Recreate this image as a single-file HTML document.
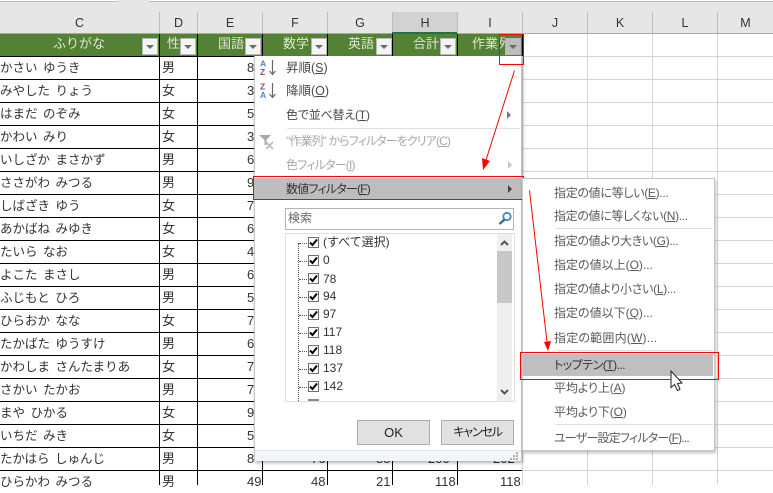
<!DOCTYPE html>
<html lang="ja"><head><meta charset="utf-8">
<style>
html,body{margin:0;padding:0}
body{width:773px;height:485px;overflow:hidden;background:#fff;position:relative;font-family:"Liberation Sans","Noto Sans CJK JP",sans-serif;font-size:12px;color:#222}
div,span,i,b{position:absolute;font-style:normal;font-weight:normal;white-space:nowrap}
.h{top:12px;height:21px;line-height:22px;text-align:center;font-size:12.5px;color:#333;border-left:1px solid #bdbdbd;box-sizing:border-box}
.g{top:34px;height:22px;line-height:20px;color:#dfe8d8;font-size:13px}
.b{top:38px;width:16px;height:17px;background:#f4f4f4;border:1px solid #b8b8b8;box-sizing:border-box}
.b:after{content:"";position:absolute;left:3px;top:6px;border-left:4px solid transparent;border-right:4px solid transparent;border-top:4px solid #6a6a6a}
.v{top:34px;bottom:0;width:1px;background:#000}
.r{left:0;width:522px;height:23px;border-top:1px solid #000;box-sizing:border-box;line-height:22px}
.n{left:0;font-size:12.5px;color:#333;word-spacing:2px}
.s{left:162px;font-size:13px;color:#333}
.d{left:247px;font-size:13px;color:#333;font-family:"Liberation Sans",sans-serif}
.m{left:286px;height:20px;line-height:20px;color:#4a4a4a;font-size:12px;font-feature-settings:"palt"}
.o{color:#a8a8a8}
.sm{left:554px;height:20px;line-height:20px;color:#5a5a5a;font-size:12px;font-feature-settings:"palt"}
u{text-underline-offset:1px}
.sep{height:1px;background:#e0e0e0}
.c{left:308px;width:9px;height:9px;border:1px solid #707070;background:#fff}
.c svg{position:absolute;left:0;top:0}
.l{left:323px;height:18px;line-height:18px;font-size:12px;color:#333}
.dh{left:299px;width:8px;height:0;border-top:1px dotted #555}
.red{border:1px solid #f00;box-sizing:border-box}
.btn{top:420px;width:73px;height:25px;background:#e1e1e1;border:1px solid #adadad;box-sizing:border-box;text-align:center;line-height:23px;font-size:12px;color:#222;font-feature-settings:"palt"}
</style></head><body>

<div style="left:0;top:0;width:773px;height:12px;background:#e6e6e6"></div>
<div style="left:0;top:0;width:118px;height:2px;background:#fff;border-bottom:1px solid #bbb;box-sizing:border-box"></div>
<div style="left:149px;top:0;width:624px;height:2px;background:#fff;border-bottom:1px solid #bbb;box-sizing:border-box"></div>

<div style="left:0;top:12px;width:773px;height:22px;background:#e6e6e6;border-bottom:1px solid #a8a8a8;box-sizing:border-box"></div>
<div class="h" style="left:0;width:159px;border:0">C</div>
<div class="h" style="left:159px;width:38px">D</div>
<div class="h" style="left:197px;width:65px">E</div>
<div class="h" style="left:262px;width:65px">F</div>
<div class="h" style="left:327px;width:65px">G</div>
<div class="h" style="left:392px;width:65px;background:#d2d2d2">H</div>
<div class="h" style="left:457px;width:65px">I</div>
<div class="h" style="left:522px;width:65px">J</div>
<div class="h" style="left:587px;width:65px">K</div>
<div class="h" style="left:652px;width:65px">L</div>
<div class="h" style="left:717px;width:56px">M</div>
<div style="left:392px;top:32px;width:65px;height:2px;background:#217346"></div>

<!-- right hand grid -->
<div style="left:522px;top:34px;width:251px;height:451px;background-image:linear-gradient(90deg,#d4d4d4 1px,transparent 1px);background-size:65px 100%"></div>
<div style="left:522px;top:56px;width:251px;height:429px;background-image:linear-gradient(180deg,#d4d4d4 1px,transparent 1px);background-size:100% 23px"></div>

<!-- green header -->
<div style="left:0;top:34px;width:522px;height:22px;background:#548235"></div>
<div class="g" style="left:53px">ふりがな</div><div class="b" style="left:142px"></div>
<div class="g" style="left:167px">性</div><div class="b" style="left:180px"></div>
<div class="g" style="left:218px">国語</div><div class="b" style="left:245px"></div>
<div class="g" style="left:283px">数学</div><div class="b" style="left:311px"></div>
<div class="g" style="left:348px">英語</div><div class="b" style="left:376px"></div>
<div class="g" style="left:413px">合計</div><div class="b" style="left:440px"></div>
<div class="g" style="left:472px;width:33px;overflow:hidden">作業列</div><div class="b" style="left:505px;background:#bdbdbd"></div>

<!-- data rows -->
<div class="r" style="top:56px"><i class="n">かさい ゆうき</i><i class="s">男</i><i class="d">8</i></div>
<div class="r" style="top:79px"><i class="n">みやした りょう</i><i class="s">女</i><i class="d">3</i></div>
<div class="r" style="top:102px"><i class="n">はまだ のぞみ</i><i class="s">女</i><i class="d">5</i></div>
<div class="r" style="top:125px"><i class="n">かわい みり</i><i class="s">女</i><i class="d">3</i></div>
<div class="r" style="top:148px"><i class="n">いしざか まさかず</i><i class="s">男</i><i class="d">6</i></div>
<div class="r" style="top:171px"><i class="n">ささがわ みつる</i><i class="s">男</i><i class="d">9</i></div>
<div class="r" style="top:194px"><i class="n">しばざき ゆう</i><i class="s">女</i><i class="d">7</i></div>
<div class="r" style="top:217px"><i class="n">あかばね みゆき</i><i class="s">女</i><i class="d">6</i></div>
<div class="r" style="top:240px"><i class="n">たいら なお</i><i class="s">女</i><i class="d">4</i></div>
<div class="r" style="top:263px"><i class="n">よこた まさし</i><i class="s">男</i><i class="d">6</i></div>
<div class="r" style="top:286px"><i class="n">ふじもと ひろ</i><i class="s">男</i><i class="d">5</i></div>
<div class="r" style="top:309px"><i class="n">ひらおか なな</i><i class="s">女</i><i class="d">7</i></div>
<div class="r" style="top:332px"><i class="n">たかばた ゆうすけ</i><i class="s">男</i><i class="d">6</i></div>
<div class="r" style="top:355px"><i class="n">かわしま さんたまりあ</i><i class="s">女</i><i class="d">7</i></div>
<div class="r" style="top:378px"><i class="n">さかい たかお</i><i class="s">男</i><i class="d">7</i></div>
<div class="r" style="top:401px"><i class="n">まや ひかる</i><i class="s">女</i><i class="d">9</i></div>
<div class="r" style="top:424px"><i class="n">いちだ みき</i><i class="s">女</i><i class="d">5</i></div>
<div class="r" style="top:447px"><i class="n">たかはら しゅんじ</i><i class="s">男</i><i class="d">8</i><i class="d" style="left:311px">76</i><i class="d" style="left:376px">85</i><i class="d" style="left:428px">200</i><i class="d" style="left:493px">202</i></div>
<div class="r" style="top:470px"><i class="n">ひらかわ みつる</i><i class="s">男</i><i class="d">49</i><i class="d" style="left:311px">48</i><i class="d" style="left:376px">21</i><i class="d" style="left:435px">118</i><i class="d" style="left:500px">118</i></div>

<div class="v" style="left:159px"></div>
<div class="v" style="left:197px"></div>
<div class="v" style="left:262px"></div>
<div class="v" style="left:327px"></div>
<div class="v" style="left:392px"></div>
<div class="v" style="left:457px"></div>
<div class="v" style="left:522px;background:#000;height:22px;bottom:auto"></div>

<!-- main menu -->
<div style="left:254px;top:56px;width:268px;height:405px;background:#fff;border:1px solid #c6c6c6;border-top:0;box-sizing:border-box;box-shadow:1px 2px 3px rgba(0,0,0,.3)"></div>
<div style="left:255px;top:450px;width:266px;height:10px;background:#f3f5f7;border-top:1px solid #dde6ee"></div>

<svg style="position:absolute;left:259px;top:59px" width="24" height="100" viewBox="0 0 24 100">
<text x="1" y="7.5" font-family="Liberation Sans" font-size="8.5" font-weight="bold" fill="#4a86c8">A</text>
<text x="1" y="16" font-family="Liberation Sans" font-size="8.5" font-weight="bold" fill="#7a4f9e">Z</text>
<path d="M13.500 1V15M10.500 12L13.500 15.500L16.500 12" fill="none" stroke="#666" stroke-width="1.200"/>
<text x="1" y="30.500" font-family="Liberation Sans" font-size="8.500" font-weight="bold" fill="#7a4f9e">Z</text>
<text x="1" y="39" font-family="Liberation Sans" font-size="8.500" font-weight="bold" fill="#4a86c8">A</text>
<path d="M13.500 24V38M10.500 35L13.500 38.500L16.500 35" fill="none" stroke="#666" stroke-width="1.200"/>
<path d="M0 76H12L7.500 81V86H5.500V81Z" fill="#a9a9a9"/>
<path d="M7 83L14 90M14 83L7 90" stroke="#b5b5b5" stroke-width="1.500"/>
</svg>

<div class="m" style="top:58px;font-size:12.5px">昇順(<u>S</u>)</div>
<div class="m" style="top:81px;font-size:12.5px">降順(<u>O</u>)</div>
<div class="m" style="top:105px;letter-spacing:-.2px">色で並べ替え(<u>T</u>)</div>
<div style="left:507px;top:111px;border-left:4px solid #777;border-top:4px solid transparent;border-bottom:4px solid transparent"></div>
<div class="sep" style="left:287px;top:128px;width:233px"></div>
<div class="m o" style="top:131px;letter-spacing:-.9px">"作業列" からフィルターをクリア(<u>C</u>)</div>
<div class="m o" style="top:155px;letter-spacing:-.8px">色フィルター(<u>I</u>)</div>
<div style="left:508px;top:161px;border-left:4px solid #c4c4c4;border-top:4px solid transparent;border-bottom:4px solid transparent"></div>
<div style="left:254px;top:178px;width:268px;height:21px;background:#bdbdbd"></div>
<div class="m" style="top:179px;color:#333;letter-spacing:-.8px">数値フィルター(<u>F</u>)</div>
<div style="left:508px;top:185px;border-left:4px solid #444;border-top:4px solid transparent;border-bottom:4px solid transparent"></div>
<div class="red" style="left:253px;top:176px;width:271px;height:24px"></div>

<!-- search -->
<div style="left:285px;top:208px;width:229px;height:22px;border:1px solid #b4b4b4;box-sizing:border-box;background:#fff"></div>
<div style="left:288px;top:209px;line-height:19px;color:#666;font-size:12px">検索</div>
<svg style="position:absolute;left:498px;top:211px" width="15" height="15" viewBox="0 0 15 15"><circle cx="9" cy="5.500" r="3.700" fill="none" stroke="#4a86b8" stroke-width="1.800"/><path d="M6.500 8.500L1.500 13" stroke="#2f6fa5" stroke-width="2.400"/></svg>

<!-- list -->
<div style="left:285px;top:233px;width:230px;height:169px;border:1px solid #e0e0e0;box-sizing:border-box;background:#fff"></div>
<div style="left:497px;top:234px;width:15px;height:167px;background:#efefef"></div>
<div style="left:497px;top:251px;width:15px;height:52px;background:#c8c8c8"></div>
<svg style="position:absolute;left:497px;top:238px" width="15" height="10" viewBox="0 0 15 10"><path d="M4 7L7.500 3.500L11 7" fill="none" stroke="#555" stroke-width="2"/></svg>
<svg style="position:absolute;left:497px;top:387px" width="15" height="10" viewBox="0 0 15 10"><path d="M4 3L7.500 6.500L11 3" fill="none" stroke="#555" stroke-width="2"/></svg>

<div style="left:298px;top:243px;height:158px;width:0;border-left:1px dotted #555"></div>
<div class="dh" style="top:243px"></div><div class="dh" style="top:261px"></div><div class="dh" style="top:279px"></div><div class="dh" style="top:297px"></div><div class="dh" style="top:315px"></div><div class="dh" style="top:333px"></div><div class="dh" style="top:351px"></div><div class="dh" style="top:369px"></div><div class="dh" style="top:387px"></div>

<div class="c" style="top:237px"><svg width="9" height="9"><path d="M1 4.500L3.500 7L8 1.500" fill="none" stroke="#000" stroke-width="2"/></svg></div><div class="l" style="top:233px">(すべて選択)</div>
<div class="c" style="top:255px"><svg width="9" height="9"><path d="M1 4.500L3.500 7L8 1.500" fill="none" stroke="#000" stroke-width="2"/></svg></div><div class="l" style="top:251px">0</div>
<div class="c" style="top:273px"><svg width="9" height="9"><path d="M1 4.500L3.500 7L8 1.500" fill="none" stroke="#000" stroke-width="2"/></svg></div><div class="l" style="top:270px">78</div>
<div class="c" style="top:291px"><svg width="9" height="9"><path d="M1 4.500L3.500 7L8 1.500" fill="none" stroke="#000" stroke-width="2"/></svg></div><div class="l" style="top:287px">94</div>
<div class="c" style="top:309px"><svg width="9" height="9"><path d="M1 4.500L3.500 7L8 1.500" fill="none" stroke="#000" stroke-width="2"/></svg></div><div class="l" style="top:305px">97</div>
<div class="c" style="top:327px"><svg width="9" height="9"><path d="M1 4.500L3.500 7L8 1.500" fill="none" stroke="#000" stroke-width="2"/></svg></div><div class="l" style="top:323px">117</div>
<div class="c" style="top:345px"><svg width="9" height="9"><path d="M1 4.500L3.500 7L8 1.500" fill="none" stroke="#000" stroke-width="2"/></svg></div><div class="l" style="top:341px">118</div>
<div class="c" style="top:363px"><svg width="9" height="9"><path d="M1 4.500L3.500 7L8 1.500" fill="none" stroke="#000" stroke-width="2"/></svg></div><div class="l" style="top:359px">137</div>
<div class="c" style="top:381px"><svg width="9" height="9"><path d="M1 4.500L3.500 7L8 1.500" fill="none" stroke="#000" stroke-width="2"/></svg></div><div class="l" style="top:377px">142</div>
<div style="left:308px;top:399px;width:11px;height:2px;background:#888"></div>

<div class="btn" style="left:357px;font-family:'Liberation Sans',sans-serif;font-size:13px">OK</div>
<div class="btn" style="left:441px;letter-spacing:-1.2px">キャンセル</div>
<svg style="position:absolute;left:510px;top:451px" width="10" height="9"><path d="M6 1h2v2H6zM3 4h2v2H3zM6 4h2v2H6zM0 7h2v2H0zM3 7h2v2H3zM6 7h2v2H6z" fill="#b0b0b0"/></svg>

<!-- submenu -->
<div style="left:522px;top:178px;width:193px;height:273px;background:#fff;border:1px solid #c6c6c6;box-sizing:border-box;box-shadow:1px 2px 3px rgba(0,0,0,.25)"></div>
<div class="sm" style="top:183px;letter-spacing:-.3px">指定の値に等しい(<u>E</u>)...</div>
<div class="sm" style="top:206px;letter-spacing:-.35px">指定の値に等しくない(<u>N</u>)...</div>
<div class="sep" style="left:555px;top:228px;width:158px"></div>
<div class="sm" style="top:231px;letter-spacing:-.3px">指定の値より大きい(<u>G</u>)...</div>
<div class="sm" style="top:255px">指定の値以上(<u>O</u>)...</div>
<div class="sm" style="top:279px;letter-spacing:-.3px">指定の値より小さい(<u>L</u>)...</div>
<div class="sm" style="top:303px">指定の値以下(<u>Q</u>)...</div>
<div class="sm" style="top:328px;letter-spacing:.2px">指定の範囲内(<u>W</u>)...</div>
<div class="sep" style="left:555px;top:350px;width:158px"></div>
<div style="left:523px;top:354px;width:190px;height:22px;background:#bfbfbf"></div>
<div class="sm" style="top:355px;color:#333;letter-spacing:-.5px">トップテン(<u>T</u>)...</div>
<div class="sm" style="top:378px;letter-spacing:-.1px">平均より上(<u>A</u>)</div>
<div class="sm" style="top:402px;letter-spacing:-.1px">平均より下(<u>O</u>)</div>
<div class="sep" style="left:555px;top:424px;width:158px"></div>
<div class="sm" style="top:428px;letter-spacing:-.8px">ユーザー設定フィルター(<u>F</u>)...</div>
<div class="red" style="left:520px;top:352px;width:199px;height:28px"></div>

<!-- annotations -->
<div class="red" style="left:499px;top:34px;width:25px;height:31px"></div>
<svg style="position:absolute;left:0;top:0" width="773" height="485" viewBox="0 0 773 485">
<path d="M514.500 70.500L486 160" stroke="#f00" stroke-width="1" fill="none"/>
<path d="M483 170L482 158L490 161Z" fill="#f00"/>
<path d="M529.500 190.500L547 342" stroke="#f00" stroke-width="1" fill="none"/>
<path d="M548 351L544 342L551 341Z" fill="#f00"/>
<path d="M671 371V387.500L674.500 384.500L677.500 390.500L680 389L677.500 383.500L682 383Z" fill="#fff" stroke="#222" stroke-width="1"/>
</svg>
</body></html>
